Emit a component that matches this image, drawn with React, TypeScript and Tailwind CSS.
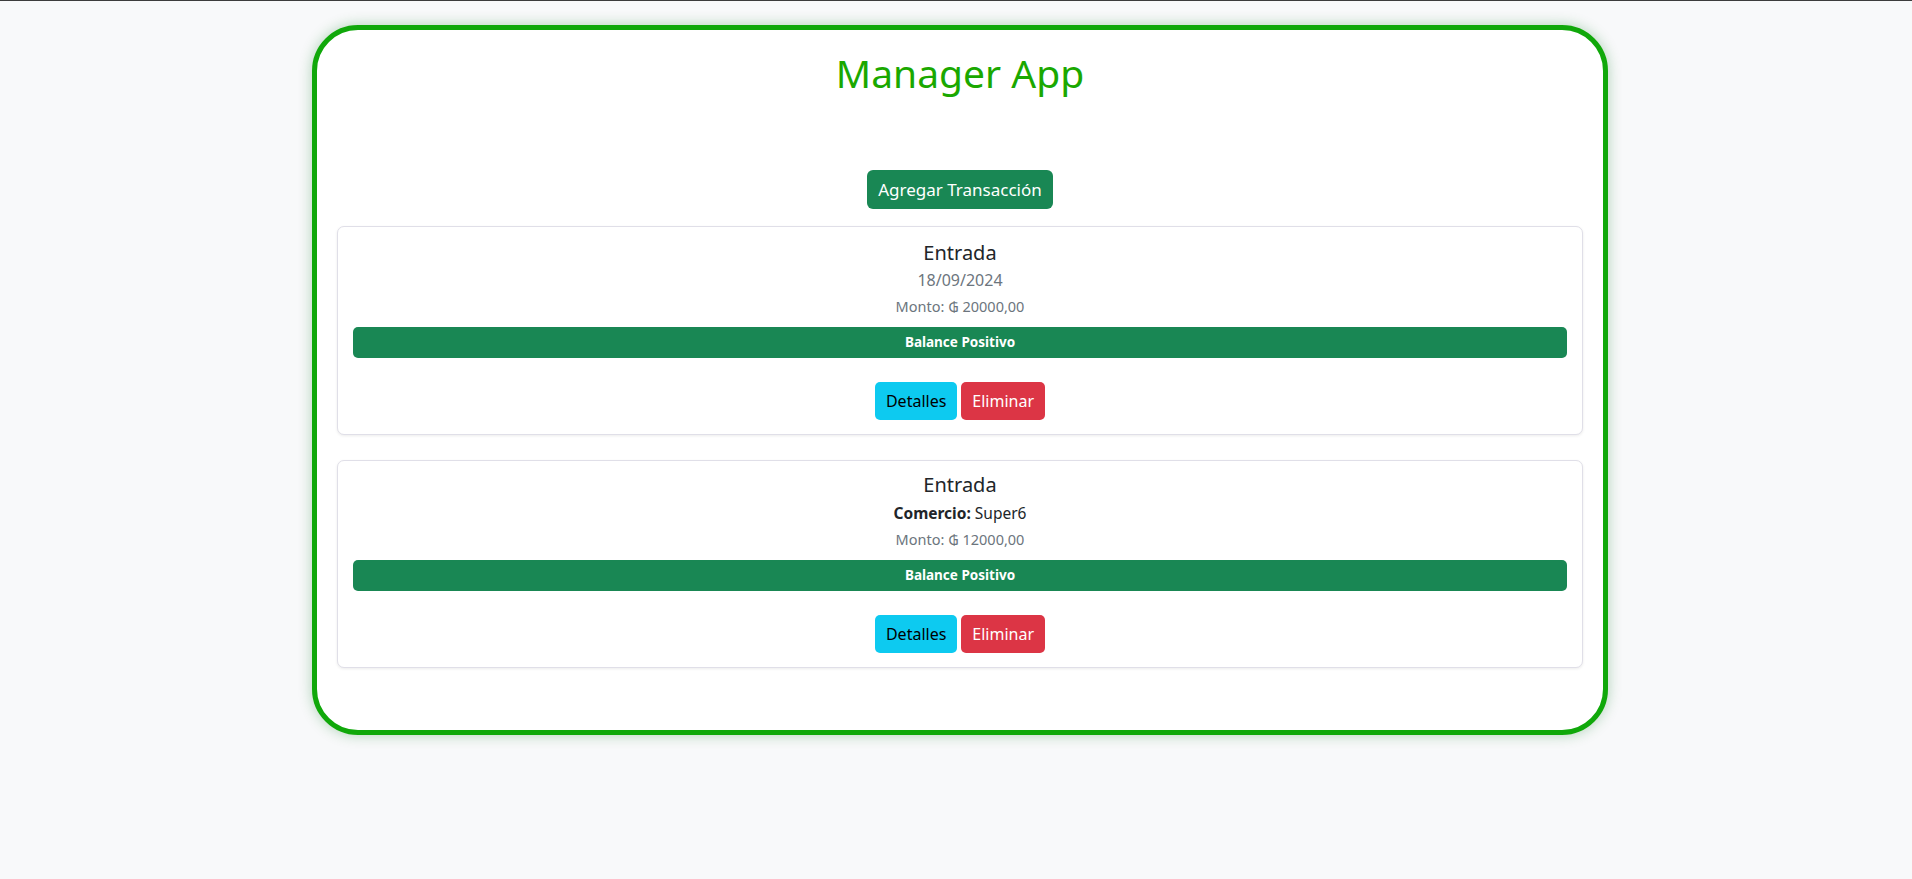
const transactions = [
  { id: 1, tipo: "Entrada", fecha: "18/09/2024", comercio: null, monto: "20000,00" },
  { id: 2, tipo: "Entrada", fecha: null, comercio: "Super6", monto: "12000,00" },
];

type Tx = (typeof transactions)[number];

const TransactionCard = ({ tx }: { tx: Tx }) => {
  return (
    <div
      className={
        tx.fecha
          ? "bg-white border border-[#e0dfe8] rounded-[7px] shadow-[0_1px_3px_rgba(0,0,0,0.08)] pt-[14px] px-[15px] pb-[14px] text-center"
          : "bg-white border border-[#e0dfe8] rounded-[7px] shadow-[0_1px_3px_rgba(0,0,0,0.08)] pt-[12px] px-[15px] pb-[14px] text-center"
      }
    >
      <h5 className="text-[20px] leading-[24px] text-[#212529]">{tx.tipo}</h5>
      {tx.fecha ? (
        <p className="mt-[3px] text-[16px] leading-[24px] text-[#6c757d]">{tx.fecha}</p>
      ) : (
        <p className="mt-[4px] text-[15.5px] leading-[24px] text-[#212529]">
          <span className="font-bold">Comercio:</span> {tx.comercio}
        </p>
      )}
      <p className="mt-[4px] text-[14.5px] leading-[21px] text-[#6c757d]">Monto: ₲ {tx.monto}</p>
      <div className="mt-[10px] h-[31px] rounded-[5px] bg-[#198754] flex items-center justify-center text-white text-[13.5px] font-bold">
        Balance Positivo
      </div>
      <div className="mt-[24px] flex justify-center gap-[4px]">
        <button className="h-[38px] px-[11px] rounded-[5px] bg-[#0dcaf0] text-black text-[16px]">Detalles</button>
        <button className="h-[38px] px-[11px] rounded-[5px] bg-[#dc3545] text-white text-[16px]">Eliminar</button>
      </div>
    </div>
  );
};

export default function App() {
  return (
    <div className="min-h-screen bg-[#f8f9fa] font-['Noto_Sans',sans-serif]">
      <div className="h-px bg-[#3c3c3c]" />
      <div className="flex justify-center pl-2 pt-[24px] pb-10">
        <div className="w-[1296px] bg-white border-[5px] border-[#10a80a] rounded-[46px] shadow-[0_0_14px_rgba(10,120,30,0.3)] px-[20px] pt-[19px] pb-[62px]">
          <h1 className="text-center text-[39px] leading-[48px] text-[#1aa800]">Manager App</h1>
          <div className="mt-[73px] flex justify-center">
            <button className="h-[39px] px-[11px] rounded-[6px] bg-[#198754] text-white text-[17px]">
              Agregar Transacción
            </button>
          </div>
          <div className="mt-[17px] flex flex-col gap-[25px]">
            {transactions.map((tx) => (
              <TransactionCard key={tx.id} tx={tx} />
            ))}
          </div>
        </div>
      </div>
    </div>
  );
}
